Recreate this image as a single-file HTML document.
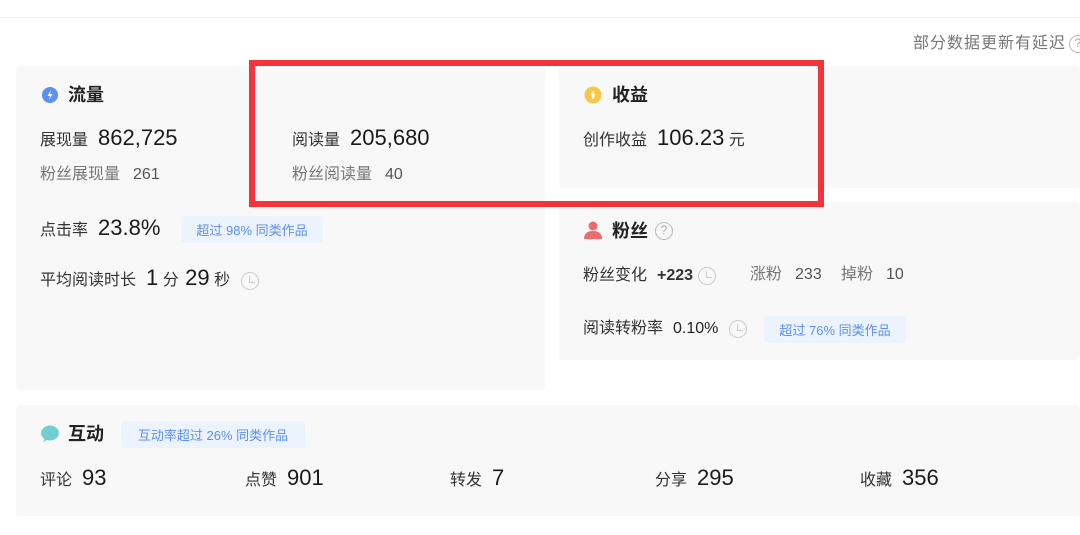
<!DOCTYPE html>
<html><head><meta charset="utf-8"><style>
*{margin:0;padding:0;box-sizing:border-box}
body{width:1080px;height:535px;background:#fff;position:relative;overflow:hidden;font-family:"Liberation Sans","Noto Sans CJK SC",sans-serif;color:#222}
.a{position:absolute;white-space:nowrap;line-height:1}
.card{position:absolute;background:#f8f8f9;border-radius:4px}
.lab{font-size:16px;color:#333}
.g{color:#777}
.num{font-size:22px;color:#1a1a1a;margin-left:10px}
.sn{font-size:16px;color:#555;margin-left:13px}
.t{font-size:18px;font-weight:bold;color:#222}
.badge{position:absolute;background:#edf3fd;color:#5b8ff0;font-size:13px;border-radius:3px;display:flex;align-items:center;justify-content:center}
.clk{display:inline-block;width:18px;height:18px;border:1.5px solid #ccc;border-radius:50%;vertical-align:middle;position:relative}
.clk:after{content:"";position:absolute;left:7px;top:3px;width:5px;height:6px;border-left:1.5px solid #ccc;border-bottom:1.5px solid #ccc}
</style></head><body>
<div style="position:absolute;left:0;top:17px;width:1080px;height:1px;background:#eee"></div>
<div class="a" style="left:913px;top:36px;font-size:16px;letter-spacing:1px;color:#777">部分数据更新有延迟</div>
<div class="a" style="left:1069px;top:35px;width:18px;height:18px;border:1.5px solid #bbb;border-radius:50%;font-size:12px;color:#aaa;text-align:center;line-height:15px">?</div>

<div class="card" style="left:16px;top:66px;width:529px;height:324px"></div>
<div class="card" style="left:559px;top:66px;width:521px;height:122px"></div>
<div class="card" style="left:559px;top:202px;width:521px;height:158px"></div>
<div class="card" style="left:16px;top:405px;width:1064px;height:111px"></div>

<svg class="a" style="left:41px;top:86px" width="18" height="18"><circle cx="9" cy="9" r="8" fill="#5b8ff0"/><path d="M10 4L6.5 10H9L8 14L11.5 8H9Z" fill="#fff"/></svg>
<div class="a t" style="left:68px;top:86px">流量</div>
<div class="a" style="left:40px;top:127px"><span class="lab">展现量</span><span class="num">862,725</span></div>
<div class="a" style="left:40px;top:167px"><span class="lab g">粉丝展现量</span><span class="sn">261</span></div>
<div class="a" style="left:40px;top:217px"><span class="lab">点击率</span><span class="num">23.8%</span></div>
<div class="badge" style="left:181px;top:216px;width:142px;height:27px">超过 98% 同类作品</div>
<div class="a" style="left:40px;top:267px"><span class="lab">平均阅读时长</span><span class="num">1</span><span class="lab"> 分 </span><span class="num" style="margin-left:2px">29</span><span class="lab"> 秒 </span><span class="clk" style="margin-left:6px"></span></div>

<div class="a" style="left:292px;top:127px"><span class="lab">阅读量</span><span class="num">205,680</span></div>
<div class="a" style="left:292px;top:167px"><span class="lab g">粉丝阅读量</span><span class="sn">40</span></div>

<svg class="a" style="left:584px;top:86px" width="18" height="18"><circle cx="9" cy="9" r="8.5" fill="#f5c84c"/><path d="M9 5v8M7 8h4M7 10h4" stroke="#fff" stroke-width="1.3"/></svg>
<div class="a t" style="left:612px;top:86px">收益</div>
<div class="a" style="left:583px;top:127px"><span class="lab">创作收益</span><span class="num">106.23</span><span class="lab"> 元</span></div>

<svg class="a" style="left:583px;top:220px" width="20" height="20"><circle cx="10" cy="6" r="4.5" fill="#ef6b6b"/><path d="M1 19Q1 11 10 11Q19 11 19 19Z" fill="#ef6b6b"/></svg>
<div class="a t" style="left:612px;top:222px">粉丝</div>
<div class="a" style="left:655px;top:222px;width:18px;height:18px;border:1.5px solid #bbb;border-radius:50%;font-size:12px;color:#aaa;text-align:center;line-height:15px">?</div>
<div class="a" style="left:583px;top:267px"><span class="lab">粉丝变化</span><span style="font-size:16px;margin-left:10px;font-weight:bold;color:#333">+223</span> <span class="clk"></span></div>
<div class="a" style="left:750px;top:267px"><span class="lab g">涨粉</span><span class="sn">233</span></div>
<div class="a" style="left:841px;top:267px"><span class="lab g">掉粉</span><span class="sn">10</span></div>
<div class="a" style="left:583px;top:320px"><span class="lab">阅读转粉率</span><span style="font-size:16px;margin-left:10px;color:#222">0.10%</span> <span class="clk" style="margin-left:6px"></span></div>
<div class="badge" style="left:764px;top:316px;width:142px;height:27px">超过 76% 同类作品</div>

<svg class="a" style="left:40px;top:425px" width="20" height="18"><ellipse cx="10" cy="8" rx="9" ry="7.5" fill="#74cdd0"/><path d="M5 13L3 17L9 14Z" fill="#74cdd0"/></svg>
<div class="a t" style="left:68px;top:425px">互动</div>
<div class="badge" style="left:121px;top:421px;width:184px;height:27px">互动率超过 26% 同类作品</div>
<div class="a" style="left:40px;top:467px"><span class="lab">评论</span><span class="num">93</span></div>
<div class="a" style="left:245px;top:467px"><span class="lab">点赞</span><span class="num">901</span></div>
<div class="a" style="left:450px;top:467px"><span class="lab">转发</span><span class="num">7</span></div>
<div class="a" style="left:655px;top:467px"><span class="lab">分享</span><span class="num">295</span></div>
<div class="a" style="left:860px;top:467px"><span class="lab">收藏</span><span class="num">356</span></div>

<div style="position:absolute;left:249px;top:60px;width:575px;height:147px;border:6px solid #f5333a"></div>
</body></html>
